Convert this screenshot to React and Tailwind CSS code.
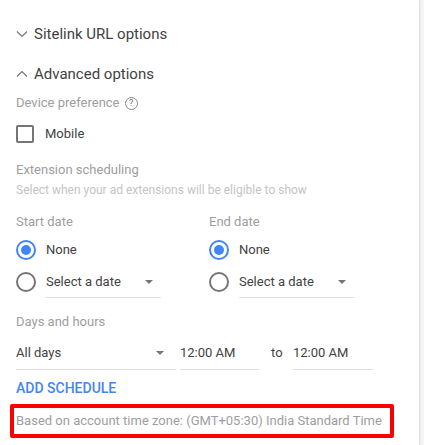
function Chevron({ up }) {
  return (
    <svg width="12" height="8" viewBox="0 0 12 8" fill="none" className="shrink-0">
      <path d={up ? "M1 6.5 L6 1.5 L11 6.5" : "M1 1.5 L6 6.5 L11 1.5"} stroke="#757575" strokeWidth="1.2" />
    </svg>
  );
}

function Radio({ checked }) {
  return (
    <span className={`flex h-5 w-5 shrink-0 items-center justify-center rounded-full border-2 ${checked ? "border-[#4285f4]" : "border-[#757575]"}`}>
      {checked && <span className="h-[10px] w-[10px] rounded-full bg-[#4285f4]" />}
    </span>
  );
}

function Caret() {
  return <span className="h-0 w-0 border-x-[4px] border-t-[4px] border-x-transparent border-t-[#757575]" />;
}

function DateColumn({ label }) {
  return (
    <div className="w-[193px]">
      <div className="h-[16px] text-[13px] leading-[16px] text-[#9e9e9e]">{label}</div>
      <div className="mt-[10px] flex h-[20px] items-center">
        <Radio checked />
        <span className="ml-[10px] text-[13px] text-[#424242]">None</span>
      </div>
      <div className="mt-[12px] flex h-[20px] items-center">
        <Radio />
        <div className="ml-[10px] flex w-[115px] items-center justify-between pr-[8px]">
          <span className="text-[13px] text-[#424242]">Select a date</span>
          <Caret />
        </div>
      </div>
      <div className="ml-[30px] mt-[5px] h-px w-[115px] bg-[#e0e0e0]" />
    </div>
  );
}

export default function App() {
  return (
    <div className="h-[445px] w-[424px] overflow-hidden bg-[#f5f5f5] font-['Roboto',sans-serif]">
      <div className="h-full w-[420px] border-r border-[#e4e4e4] bg-white pl-[16px] pt-[24px] shadow-[0_1px_2px_rgba(0,0,0,0.12)]">
        <div className="flex h-[20px] items-center gap-[6px] text-[15px] text-[#424242]">
          <Chevron />
          <span>Sitelink URL options</span>
        </div>
        <div className="mt-[20px] flex h-[20px] items-center gap-[6px] text-[15px] text-[#424242]">
          <Chevron up />
          <span>Advanced options</span>
        </div>

        <div className="mt-[11px] flex h-[16px] items-center gap-[5px] text-[13px] text-[#9e9e9e]">
          <span>Device preference</span>
          <span className="flex h-[13px] w-[13px] items-center justify-center rounded-full border border-[#8a8a8a] text-[9px] leading-none text-[#757575]">?</span>
        </div>

        <div className="mt-[14px] flex h-[18px] items-center">
          <span className="h-[18px] w-[18px] rounded-[2px] border-2 border-[#757575]" />
          <span className="ml-[11px] text-[13px] text-[#424242]">Mobile</span>
        </div>

        <div className="mt-[19px] h-[16px] text-[13px] leading-[16px] text-[#9e9e9e]">Extension scheduling</div>
        <div className="mt-[4px] h-[16px] text-[12px] leading-[16px] text-[#c4c4c4]">
          Select when your ad extensions will be eligible to show
        </div>

        <div className="mt-[16px] flex">
          <DateColumn label="Start date" />
          <DateColumn label="End date" />
        </div>

        <div className="mt-[16px] h-[16px] text-[13px] leading-[16px] text-[#9e9e9e]">Days and hours</div>

        <div className="mt-[15px] flex h-[16px] items-center text-[13px] text-[#424242]">
          <div className="flex w-[160px] items-center justify-between pr-[12px]">
            <span>All days</span>
            <Caret />
          </div>
          <span className="ml-[4px] w-[79px]">12:00 AM</span>
          <span className="ml-[12px] w-[22px]">to</span>
          <span className="w-[80px]">12:00 AM</span>
        </div>
        <div className="mt-[8px] flex">
          <div className="h-px w-[160px] bg-[#e0e0e0]" />
          <div className="ml-[4px] h-px w-[79px] bg-[#e0e0e0]" />
          <div className="ml-[34px] h-px w-[80px] bg-[#e0e0e0]" />
        </div>

        <div className="mt-[10px] h-[16px] text-[14px] font-medium leading-[16px] text-[#4285f4]">ADD SCHEDULE</div>

        <div className="-ml-[6px] mt-[8px] flex h-[34px] w-[384px] items-center rounded-[2px] border-[4px] border-[#ff0000] pl-[2px] text-[13px] text-[#9e9e9e]">
          Based on account time zone: (GMT+05:30) India Standard Time
        </div>
      </div>
    </div>
  );
}
